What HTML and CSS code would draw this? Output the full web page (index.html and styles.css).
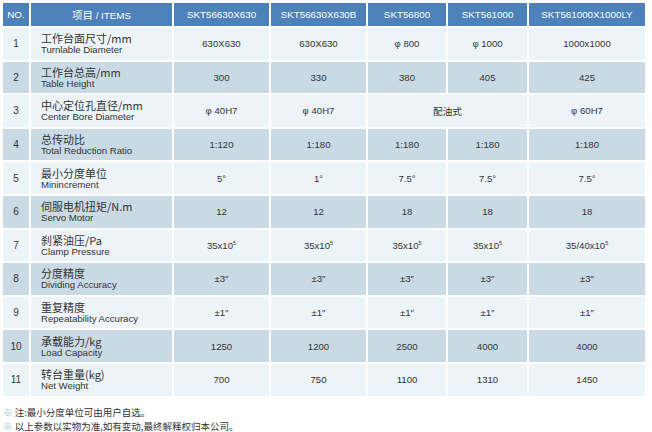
FILE: index.html
```html
<!DOCTYPE html>
<html lang="zh-CN">
<head>
<meta charset="utf-8">
<title>Specs</title>
<link rel="stylesheet" href="styles.css">
</head>
<body>
<table class="spec">
  <colgroup>
    <col class="c-no"><col class="c-item"><col class="c-a"><col class="c-b"><col class="c-c"><col class="c-d"><col class="c-e">
  </colgroup>
  <thead>
    <tr><th>NO.</th><th><span class="cn">项目</span> / ITEMS</th><th>SKT56630X630</th><th>SKT56630X630B</th><th>SKT56800</th><th>SKT561000</th><th>SKT561000X1000LY</th></tr>
  </thead>
  <tbody>
    <tr class="lt"><td class="no">1</td><td class="item"><span class="cn">工作台面尺寸/mm</span><span class="en">Turnlable Diameter</span></td><td>630X630</td><td>630X630</td><td>φ 800</td><td>φ 1000</td><td>1000x1000</td></tr>
    <tr class="dk"><td class="no">2</td><td class="item"><span class="cn">工作台总高/mm</span><span class="en">Table Height</span></td><td>300</td><td>330</td><td>380</td><td>405</td><td>425</td></tr>
    <tr class="lt"><td class="no">3</td><td class="item"><span class="cn">中心定位孔直径/mm</span><span class="en">Center Bore Diameter</span></td><td>φ 40H7</td><td>φ 40H7</td><td colspan="2" class="cnv">配油式</td><td>φ 60H7</td></tr>
    <tr class="dk"><td class="no">4</td><td class="item"><span class="cn">总传动比</span><span class="en">Total Reduction Ratio</span></td><td>1:120</td><td>1:180</td><td>1:180</td><td>1:180</td><td>1:180</td></tr>
    <tr class="lt"><td class="no">5</td><td class="item"><span class="cn">最小分度单位</span><span class="en">Minincrement</span></td><td>5°</td><td>1°</td><td>7.5°</td><td>7.5°</td><td>7.5°</td></tr>
    <tr class="dk"><td class="no">6</td><td class="item"><span class="cn">伺服电机扭矩/N.m</span><span class="en">Servo Motor</span></td><td>12</td><td>12</td><td>18</td><td>18</td><td>18</td></tr>
    <tr class="lt"><td class="no">7</td><td class="item"><span class="cn">刹紧油压/Pa</span><span class="en">Clamp Pressure</span></td><td>35x10<sup>5</sup></td><td>35x10<sup>5</sup></td><td>35x10<sup>5</sup></td><td>35x10<sup>5</sup></td><td>35/40x10<sup>5</sup></td></tr>
    <tr class="dk"><td class="no">8</td><td class="item"><span class="cn">分度精度</span><span class="en">Dividing Accuracy</span></td><td>±3″</td><td>±3″</td><td>±3″</td><td>±3″</td><td>±3″</td></tr>
    <tr class="lt"><td class="no">9</td><td class="item"><span class="cn">重复精度</span><span class="en">Repeatability Accuracy</span></td><td>±1″</td><td>±1″</td><td>±1″</td><td>±1″</td><td>±1″</td></tr>
    <tr class="dk"><td class="no">10</td><td class="item"><span class="cn">承载能力/kg</span><span class="en">Load Capacity</span></td><td>1250</td><td>1200</td><td>2500</td><td>4000</td><td>4000</td></tr>
    <tr class="lt"><td class="no">11</td><td class="item"><span class="cn">转台重量(kg)</span><span class="en">Net Weight</span></td><td>700</td><td>750</td><td>1100</td><td>1310</td><td>1450</td></tr>
  </tbody>
</table>
<div class="notes">
  <p><span class="mark">※</span> 注:最小分度单位可由用户自选。</p>
  <p><span class="mark">※</span> 以上参数以实物为准,如有变动,最终解释权归本公司。</p>
</div>
</body>
</html>
```
FILE: styles.css
```css
html, body {
  margin: 0;
  padding: 0;
  background: #ffffff;
}
body {
  padding: 1px 0 0 1px;
  font-family: "Liberation Sans", Arial, "Noto Sans CJK SC", sans-serif;
  color: #333333;
}
.spec {
  border-collapse: separate;
  border-spacing: 2px;
  table-layout: fixed;
  width: 646px;
}
.c-no { width: 26px; }
.c-item { width: 141px; }
.c-a { width: 95px; }
.c-b { width: 95px; }
.c-c { width: 78px; }
.c-d { width: 79px; }
.c-e { width: 116px; }

.spec th {
  background: #4c81ba;
  color: #ffffff;
  font-weight: normal;
  font-size: 9.8px;
  height: 23px;
  padding: 0;
  text-align: center;
  white-space: nowrap;
}
.spec th .cn {
  font-family: "Noto Sans CJK SC", sans-serif;
  font-size: 10.5px;
}
.spec td {
  height: 31.6px;
  padding: 0;
  text-align: center;
  font-size: 9.6px;
  white-space: nowrap;
  color: #333333;
}
.spec tr.lt td { background: #edf4f8; }
.spec tr.dk td { background: #c9dae5; }
.spec td.no { font-size: 10px; }
.spec td.item {
  text-align: left;
  padding-left: 10px;
}
.item .cn {
  display: block;
  font-family: "Noto Sans CJK SC", sans-serif;
  font-size: 11px;
  line-height: 12px;
  color: #333333;
}
.item .en {
  display: block;
  font-size: 9.6px;
  line-height: 11px;
}
.cnv {
  font-family: "Noto Sans CJK SC", sans-serif;
  font-size: 10px;
}
.spec sup {
  font-size: 5.5px;
  vertical-align: 4px;
  line-height: 0;
}
.notes {
  margin-top: 7px;
  padding-left: 2px;
  font-family: "Noto Sans CJK SC", sans-serif;
  font-size: 9.5px;
  color: #333333;
}
.notes p {
  margin: 0;
  line-height: 14px;
}
.mark {
  color: #9bb8cf;
}
```
